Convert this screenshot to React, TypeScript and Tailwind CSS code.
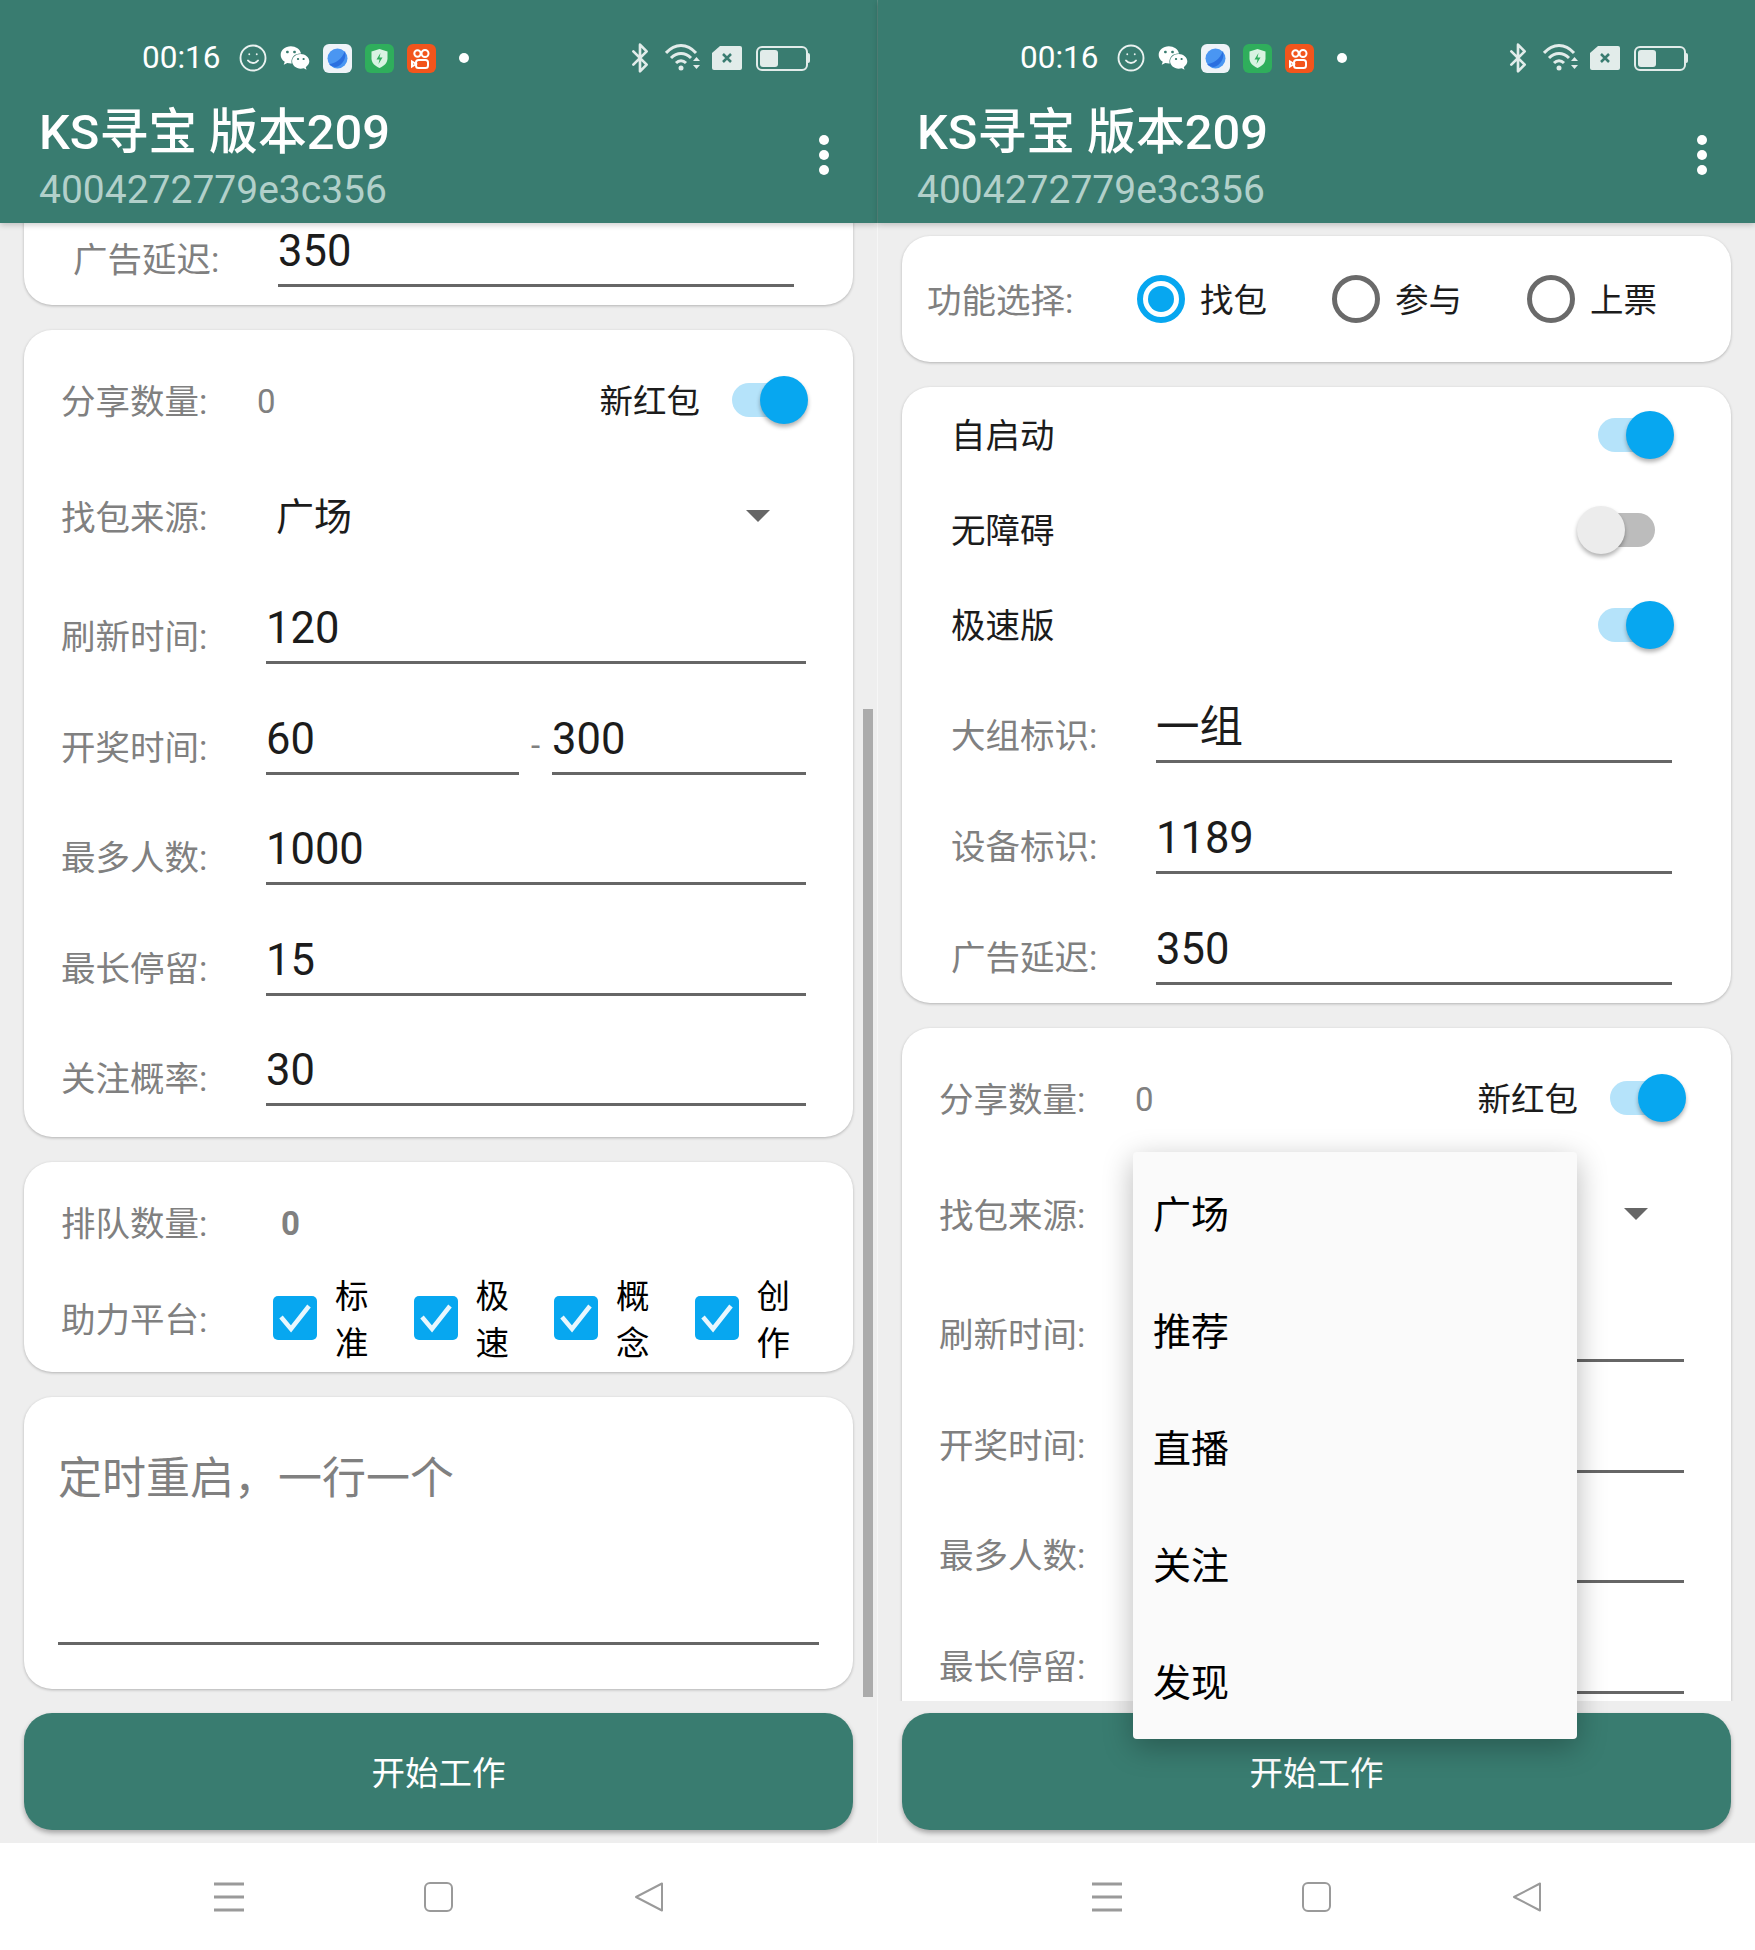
import React from 'react';
import { Bluetooth, Smile } from 'lucide-react';
import { FaWeixin } from 'react-icons/fa';

const PAGE_FONT = "font-[Roboto,'Noto_Sans_CJK_SC',sans-serif]";

const Toggle: React.FC<{ on?: boolean }> = ({ on = true }) => (
  <div className="relative w-[97px] h-[48px] shrink-0">
    {on ? (
      <>
        <div className="absolute left-[21px] top-[7px] w-[62px] h-[34px] rounded-full bg-[#b5e3fa]" />
        <div className="absolute right-0 top-0 w-[48px] h-[48px] rounded-full bg-[#07a7f0] shadow-[0_3px_4px_rgba(0,0,0,0.3)]" />
      </>
    ) : (
      <>
        <div className="absolute left-[18px] top-[7px] w-[60px] h-[34px] rounded-full bg-[#bcbcbc]" />
        <div className="absolute left-0 top-0 w-[48px] h-[48px] rounded-full bg-[#ececec] shadow-[0_3px_4px_rgba(0,0,0,0.3)]" />
      </>
    )}
  </div>
);

const Card: React.FC<{ className?: string; children: React.ReactNode }> = ({ className, children }) => (
  <div className={`bg-white rounded-[28px] shadow-[0_1px_3px_rgba(0,0,0,0.25)] ${className ?? ''}`}>{children}</div>
);

const Label: React.FC<{ text: string }> = ({ text }) => (
  <span className="block -ml-[1px] pt-[4px] text-[34.500px] leading-[44px] text-[#808080] whitespace-nowrap">{text}</span>
);

const Underlined: React.FC<{ value: string; className: string }> = ({ value, className }) => (
  <div className={`h-[89px] border-b-[3px] border-[#666] flex items-end pb-[7px] text-[43.500px] leading-[50px] text-[#1c1c1c] ${className}`}>
    {value}
  </div>
);

const Field: React.FC<{ label: string; value: string; width: string; className?: string }> = ({ label, value, width, className }) => (
  <div className={`flex items-end ${className ?? ''}`}>
    <div className="w-[204px] pb-[5px]">
      <Label text={label} />
    </div>
    <Underlined value={value} className={width} />
  </div>
);

const Radio: React.FC<{ text: string; checked?: boolean }> = ({ text, checked }) => (
  <div className="w-[195px] flex items-center gap-[15px]">
    {checked ? (
      <div className="w-[48px] h-[48px] rounded-full border-[6px] border-[#07a7f0] flex items-center justify-center">
        <div className="w-[26px] h-[26px] rounded-full bg-[#07a7f0]" />
      </div>
    ) : (
      <div className="w-[48px] h-[48px] rounded-full border-[5px] border-[#6a6a6a]" />
    )}
    <span className="block pt-[4px] text-[33.500px] text-[#1c1c1c]">{text}</span>
  </div>
);

const Check: React.FC<{ text: string }> = ({ text }) => (
  <div className="w-[140.500px] flex items-center">
    <div className="w-[44px] h-[44px] rounded-[5px] bg-[#07a7f0] flex items-center justify-center">
      <svg width="34" height="30" viewBox="0 0 34 30" fill="none">
        <path d="M3 14l10 12L31 3" stroke="#e8f7fe" strokeWidth="4.500" />
      </svg>
    </div>
    <div className="ml-[18px] pt-[5px] w-[33px] text-[33.500px] leading-[47px] text-black">{text}</div>
  </div>
);

// the same form in both phones, only scrolled differently
const Form: React.FC<{ scrollClass: string }> = ({ scrollClass }) => (
  <div className={`px-[24px] flex flex-col gap-[25px] ${scrollClass}`}>
    <Card className="h-[126px] pl-[26px] flex items-center">
      <div className="w-[209px]">
        <Label text="功能选择:" />
      </div>
      <Radio text="找包" checked />
      <Radio text="参与" />
      <Radio text="上票" />
    </Card>

    <Card className="h-[616px] pl-[50px]">
      {[
        { name: '自启动', on: true },
        { name: '无障碍', on: false },
        { name: '极速版', on: true },
      ].map((row) => (
        <div key={row.name} className="h-[95px] pr-[57px] flex items-center justify-between">
          <span className="block -ml-[1px] pt-[4px] text-[34.500px] text-[#1c1c1c]">{row.name}</span>
          <Toggle on={row.on} />
        </div>
      ))}
      <Field label="大组标识:" value="一组" width="w-[516px]" className="mt-[2px]" />
      <Field label="设备标识:" value="1189" width="w-[516px]" className="mt-[22px]" />
      <Field label="广告延迟:" value="350" width="w-[516px]" className="mt-[22px]" />
    </Card>

    <Card className="h-[807px] pl-[38px]">
      <div className="h-[140px] pr-[45px] flex items-center">
        <div className="w-[195px]">
          <Label text="分享数量:" />
        </div>
        <span className="block pt-[4px] text-[33px] text-[#808080]">0</span>
        <span className="block pt-[4px] ml-auto mr-[11px] text-[33.500px] text-[#1c1c1c]">新红包</span>
        <Toggle />
      </div>
      <div className="h-[92px] flex items-center">
        <div className="w-[214px]">
          <Label text="找包来源:" />
        </div>
        <span className="block pt-[2px] text-[38px] text-[#1c1c1c]">广场</span>
        <div className="ml-[394px] w-0 h-0 border-x-[12px] border-x-transparent border-t-[12px] border-t-[#666]" />
      </div>
      <Field label="刷新时间:" value="120" width="w-[540px]" className="mt-[13px]" />
      <div className="flex items-end mt-[22px]">
        <div className="w-[204px] pb-[5px]">
          <Label text="开奖时间:" />
        </div>
        <Underlined value="60" className="w-[253px]" />
        <span className="w-[33px] text-center pb-[5px] text-[33px] text-[#808080]">-</span>
        <Underlined value="300" className="w-[254px]" />
      </div>
      <Field label="最多人数:" value="1000" width="w-[540px]" className="mt-[21px]" />
      <Field label="最长停留:" value="15" width="w-[540px]" className="mt-[22px]" />
      <Field label="关注概率:" value="30" width="w-[540px]" className="mt-[21px]" />
    </Card>

    <Card className="h-[210px] pl-[38px]">
      <div className="h-[106px] pt-[14px] flex items-center">
        <div className="w-[219px]">
          <Label text="排队数量:" />
        </div>
        <span className="block pt-[4px] text-[33px] font-bold text-[#808080]">0</span>
      </div>
      <div className="flex items-center">
        <div className="w-[211px]">
          <Label text="助力平台:" />
        </div>
        <Check text="标准" />
        <Check text="极速" />
        <Check text="概念" />
        <Check text="创作" />
      </div>
    </Card>

    <Card className="h-[292px] px-[34px] pt-[53px]">
      <div className="h-[195px] pt-[3px] border-b-[3px] border-[#666] text-[44px] leading-[52px] text-[#808080]">定时重启，一行一个</div>
    </Card>
  </div>
);

const PlanetApp = () => (
  <svg width="29" height="29" viewBox="0 0 29 29">
    <rect width="29" height="29" rx="6" fill="#eef3f8" />
    <circle cx="14.500" cy="14.500" r="10" fill="#4a96f2" />
    <path d="M6 20c6 0 13-5 16-13 2 7-3 15-9 16-3 0-5-1-7-3z" fill="#2a6fe0" />
  </svg>
);

const ShieldApp = () => (
  <svg width="29" height="29" viewBox="0 0 29 29">
    <rect width="29" height="29" rx="6" fill="#2fae5c" />
    <path d="M14.500 5l8 2.500v7c0 4.500-3.500 7.500-8 9.500-4.500-2-8-5-8-9.500v-7z" fill="#d9f3e2" />
    <path d="M15.500 9l-4 6.500h3l-1 4.500 4-6.500h-3z" fill="#2fae5c" />
  </svg>
);

const VideoApp = () => (
  <svg width="29" height="29" viewBox="0 0 29 29" fill="none">
    <rect width="29" height="29" rx="6" fill="#f2551c" />
    <g stroke="#fff" strokeWidth="2">
      <circle cx="10.500" cy="9.500" r="3.200" />
      <circle cx="18" cy="9.500" r="3.500" />
      <rect x="9" y="16" width="12" height="8" rx="2.500" />
      <path d="M9 20l-4 2.500v-5z" />
    </g>
  </svg>
);

const Wifi = () => (
  <svg width="37" height="28" viewBox="0 0 37 28" fill="none" stroke="#e2ecea" strokeWidth="3">
    <path d="M1 9c9-10 21-10 30 0" />
    <path d="M6 14c6-6 14-6 20 0" />
    <path d="M11 19c3-3 7-3 10 0" />
    <circle cx="16" cy="24" r="2.500" fill="#e2ecea" stroke="none" />
    <path d="M28 17l3.500-4 3.500 4zM28 21l3.500 4 3.500-4z" fill="#e2ecea" stroke="none" />
  </svg>
);

const Sim = () => (
  <svg width="30" height="24" viewBox="0 0 30 24">
    <path d="M8 0h20a2 2 0 0 1 2 2v20a2 2 0 0 1-2 2H2a2 2 0 0 1-2-2V7z" fill="#e2ecea" />
    <path d="M11 8l8 8M19 8l-8 8" stroke="#397c70" strokeWidth="2.500" />
  </svg>
);

const Battery = () => (
  <div className="flex items-center">
    <div className="w-[52px] h-[25px] rounded-[6px] border-2 border-[#e2ecea] p-[2px]">
      <div className="w-[18px] h-full rounded-[3px] bg-[#e2ecea]" />
    </div>
    <div className="w-[2px] h-[10px] bg-[#e2ecea] rounded-r" />
  </div>
);

const StatusBar = () => (
  <div className="h-[40px] pl-[142px] pr-[67px] flex items-center text-white">
    <span className="w-[76px] text-[31.500px] leading-[40px]">00:16</span>
    <Smile size={30} strokeWidth={1.5} className="ml-[20px] text-[#eaf2f0]" />
    <FaWeixin size={30} className="ml-[12px] text-white" />
    <div className="ml-[13px] flex gap-[13px]">
      <PlanetApp />
      <ShieldApp />
      <VideoApp />
    </div>
    <div className="ml-[23px] w-[10px] h-[10px] rounded-full bg-white" />
    <div className="ml-auto flex items-center">
      <Bluetooth size={32} strokeWidth={2} className="text-[#e2ecea]" />
      <div className="ml-[9px]">
        <Wifi />
      </div>
      <div className="ml-[10px]">
        <Sim />
      </div>
      <div className="ml-[14px]">
        <Battery />
      </div>
    </div>
  </div>
);

const Header = () => (
  <div className="h-[223px] shrink-0 bg-[#397c70] pt-[38px] shadow-[0_2px_6px_rgba(0,0,0,0.2)] relative z-10">
    <StatusBar />
    <div className="mt-[30px] pl-[39px] pr-[48px] flex justify-between">
      <div>
        <div className="text-[48.800px] leading-[50px] font-medium text-white">KS寻宝 版本209</div>
        <div className="mt-[8px] text-[39px] leading-[48px] text-[#b2d0ca]">4004272779e3c356</div>
      </div>
      <div className="mt-[27px] flex flex-col gap-[5px]">
        <div className="w-[10px] h-[10px] rounded-full bg-white" />
        <div className="w-[10px] h-[10px] rounded-full bg-white" />
        <div className="w-[10px] h-[10px] rounded-full bg-white" />
      </div>
    </div>
  </div>
);

const NavBar = () => (
  <div className="h-[107px] shrink-0 bg-white flex items-center justify-center">
    <div className="w-[210px] flex justify-center">
      <svg width="30" height="30" viewBox="0 0 30 30" stroke="#9a9a9a" strokeWidth="3">
        <path d="M0 2h30M0 15h30M0 28h30" />
      </svg>
    </div>
    <div className="w-[210px] flex justify-center">
      <div className="w-[29px] h-[30px] rounded-[6px] border-2 border-[#9a9a9a]" />
    </div>
    <div className="w-[210px] flex justify-center">
      <svg width="30" height="30" viewBox="0 0 30 30" fill="none" stroke="#9a9a9a" strokeWidth="2" strokeLinejoin="round">
        <path d="M28 1.500v27L2 15z" />
      </svg>
    </div>
  </div>
);

const Dropdown = () => (
  <div className="absolute left-[255px] top-[1152px] w-[444px] h-[587px] pt-[5px] pl-[20px] z-20 rounded-[4px] bg-[#fafafa] shadow-[0_8px_30px_rgba(0,0,0,0.28)]">
    {['广场', '推荐', '直播', '关注', '发现'].map((item) => (
      <div key={item} className="h-[117px] flex items-center text-[38px] text-black">
        {item}
      </div>
    ))}
  </div>
);

const Phone: React.FC<{ scrollClass: string; scrollbar?: boolean; menuOpen?: boolean }> = ({ scrollClass, scrollbar, menuOpen }) => (
  <div className="relative w-[877px] h-[1950px] flex flex-col bg-[#eeeeee]">
    <Header />
    <div className="h-[1478px] shrink-0 overflow-hidden">
      <Form scrollClass={scrollClass} />
    </div>
    {scrollbar && <div className="absolute left-[863px] top-[709px] w-[10px] h-[988px] bg-[#ababab]" />}
    <div className="mx-[24px] mt-[12px] pt-[6px] h-[117px] shrink-0 rounded-[28px] bg-[#397c70] shadow-[0_3px_5px_rgba(0,0,0,0.3)] flex items-center justify-center text-[33.500px] text-white">
      开始工作
    </div>
    <div className="h-[13px] shrink-0" />
    <NavBar />
    {menuOpen && <Dropdown />}
  </div>
);

export default function App() {
  return (
    <div className={`w-[1755px] h-[1950px] flex overflow-hidden ${PAGE_FONT}`}>
      <Phone scrollClass="-mt-[685px]" scrollbar />
      <div className="w-px flex flex-col">
        <div className="h-[223px] bg-[#5f9489]" />
        <div className="h-[1620px] bg-[#f6f6f6]" />
      </div>
      <Phone scrollClass="mt-[13px]" menuOpen />
    </div>
  );
}
